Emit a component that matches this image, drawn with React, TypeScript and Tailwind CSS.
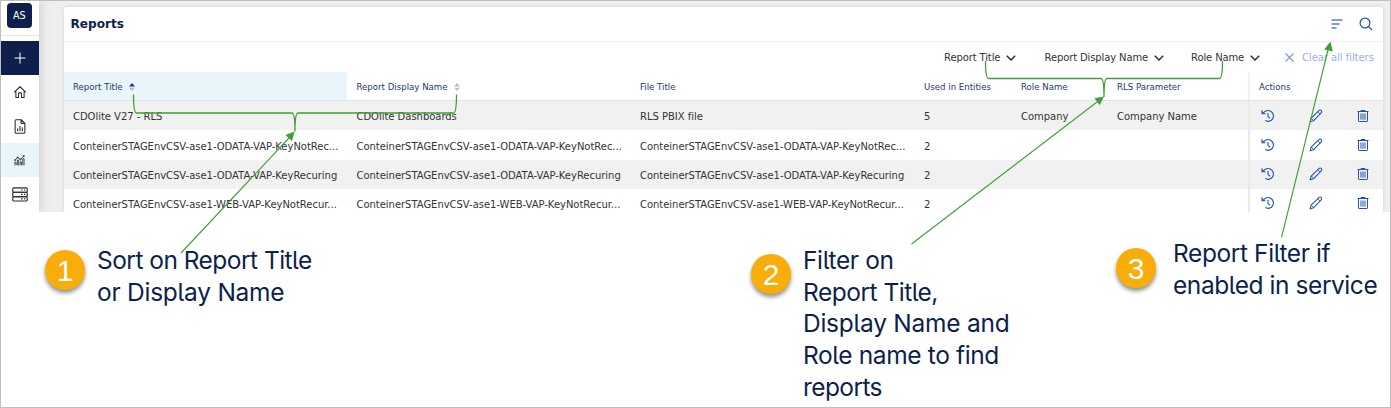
import React from "react";

type IconProps = { className?: string };

const HistoryIcon = ({ className }: IconProps) => (
  <svg viewBox="0 0 14 14" className={className} fill="none" stroke="currentColor" strokeWidth="1.100">
    <path d="M2.300 4.300A5.400 5.400 0 1 1 4.300 11.600" />
    <path d="M1 1.300v3.500h3.500" />
    <path d="M1.300 2.200v2.300h2.300z" fill="currentColor" stroke="none" />
    <path d="M7 4v3.600l2.100 1.600" />
  </svg>
);

const PencilIcon = ({ className }: IconProps) => (
  <svg viewBox="0 0 16 16" className={className} fill="none" stroke="currentColor" strokeWidth="1.200" strokeLinejoin="round">
    <path d="M1.300 14.700l1.200-4.400 8.800-8.500c.8-.8 2-.8 2.700-.1s.7 1.900-.1 2.700L5.400 13.300z" />
    <path d="M10 3.100l2.800 2.800M2.500 10.300l2.900 3" strokeWidth="1" />
  </svg>
);

const TrashIcon = ({ className }: IconProps) => (
  <svg viewBox="0 0 14 14" className={className} fill="none" stroke="currentColor" strokeWidth="1">
    <path d="M1.500 2.500h11M5 2.500v-1h4v1M2.500 2.500v9.400c0 .4.200.6.600.6h7.800c.4 0 .6-.2.600-.6V2.500" />
    <path d="M5 4.500v6.200M7 4.500v6.200M9 4.500v6.200" />
  </svg>
);

const Chevron = () => (
  <svg viewBox="0 0 10 6" className="h-[6px] w-[10px]" fill="none" stroke="#262626" strokeWidth="1.400">
    <path d="M.8.800L5 5 9.200.800" />
  </svg>
);

const SortMark = ({ active = false }: { active?: boolean }) => (
  <svg viewBox="0 0 6 8" className="h-[8px] w-[6px]">
    <path d="M3 0l3 3.600H0z" fill={active ? "#0b3a9b" : "#bdbdbd"} />
    <path d="M3 8L0 4.700h6z" fill="#bdbdbd" />
  </svg>
);

const HomeIcon = () => (
  <svg viewBox="0 0 16 16" className="size-[14px]" fill="none" stroke="#2b2b2b" strokeWidth="1.200" strokeLinejoin="round">
    <path d="M1.300 8.500L8 2l6.700 6.500M3.300 7v7.200h3V9.800c0-.500.300-.800.800-.800h1.800c.5 0 .8.300.8.800v4.400h3V7" />
  </svg>
);

const ReportIcon = () => (
  <svg viewBox="0 0 12 16" className="h-[15px] w-[12px]" fill="none" stroke="#2b2b2b" strokeWidth="1.150" strokeLinejoin="round">
    <path d="M.8 2c0-.700.4-1.200 1.100-1.200h5.300l4 4V14c0 .700-.4 1.200-1.100 1.200H1.900c-.7 0-1.100-.5-1.100-1.200zM7.200.800v4h4" />
    <path d="M3.500 10v3M6 7.500V13M8.500 9v4" />
  </svg>
);

const AnalyticsIcon = () => (
  <svg viewBox="0 0 12 12" className="size-[11px]" fill="none" stroke="#333" strokeWidth=".9">
    <path d="M1.300 5.500L4 2.700l3.200 2.200L10.600 1" />
    <circle cx="1.200" cy="5.500" r=".6" fill="#333" />
    <circle cx="4" cy="2.700" r=".6" fill="#333" />
    <circle cx="7.200" cy="4.900" r=".6" fill="#333" />
    <circle cx="10.700" cy="1" r=".6" fill="#333" />
    <path d="M.9 11.200V8h1.400v3.200M3.700 11.200V5.500h1.400v5.700M6.700 11.200V7.500h1.400v3.700M9.600 11.200V4H11v7.200" />
  </svg>
);

const ServerIcon = () => (
  <svg viewBox="0 0 16 15" className="h-[15px] w-[16px]" fill="none" stroke="#2b2b2b" strokeWidth="1.150">
    <rect x=".8" y=".8" width="14.400" height="4.400" rx="1" />
    <rect x=".8" y="5.200" width="14.400" height="4.400" rx="1" />
    <rect x=".8" y="9.600" width="14.400" height="4.400" rx="1" />
    <path d="M9 3h1.500M12 3h1.300M9 7.400h1.500M12 7.400h1.300M9 11.800h1.500M12 11.800h1.300" />
  </svg>
);

const columns = "grid grid-cols-[283.5px_283.5px_284px_97px_96px_140px_135px]";

const headers = ["Report Title", "Report Display Name", "File Title", "Used in Entities", "Role Name", "RLS Parameter", "Actions"];

const notRec = "ConteinerSTAGEnvCSV-ase1-ODATA-VAP-KeyNotRec...";
const rec = "ConteinerSTAGEnvCSV-ase1-ODATA-VAP-KeyRecuring";
const web = "ConteinerSTAGEnvCSV-ase1-WEB-VAP-KeyNotRecur...";

const rows = [
  ["CDOlite V27 - RLS", "CDOlite Dashboards", "RLS PBIX file", "5", "Company", "Company Name"],
  [notRec, notRec, notRec, "2", "", ""],
  [rec, rec, rec, "2", "", ""],
  [web, web, web, "2", "", ""],
];

function Sidebar() {
  return (
    <nav className="z-10 flex w-[38px] shrink-0 flex-col bg-white shadow-[1px_0_12px_0_#c3cad1]">
      <div className="flex h-[35px] border-b border-[#e6e6e6] pt-[2px] pl-[6px]">
        <div className="flex h-[24.500px] w-[24.500px] items-center justify-center rounded-[4px] bg-[#0e1f4d] pt-px text-[9.600px] text-white">AS</div>
      </div>
      <div className="mt-[5px] flex h-[34px] items-center justify-center bg-[#0e1f4d] pr-px">
        <svg viewBox="0 0 12 12" className="size-[12px]" stroke="#fff" strokeWidth="1"><path d="M6 .5v11M.5 6h11" /></svg>
      </div>
      <div className="flex h-[34px] items-center justify-center pr-px"><HomeIcon /></div>
      <div className="flex h-[34px] items-center justify-center pr-px"><ReportIcon /></div>
      <div className="flex h-[34px] items-center justify-center bg-[#e8f5fb] pr-px"><AnalyticsIcon /></div>
      <div className="flex h-[34px] items-center justify-center pr-px"><ServerIcon /></div>
    </nav>
  );
}

function FilterButton({ label, className }: { label: string; className: string }) {
  return (
    <div className={`flex shrink-0 items-center gap-[6px] ${className}`}>
      <span className="whitespace-nowrap">{label}</span>
      <Chevron />
    </div>
  );
}

function ReportsCard() {
  return (
    <main className="mt-[6px] ml-[24.500px] w-[1319px] shrink-0 rounded-t-[3px] bg-white shadow-[0_0_4px_#d4d2d0]">
      <header className="flex h-[35px] items-center border-b border-[#efefef] pr-[10px] pl-[7px]">
        <h1 className="pt-px text-[12.100px] font-bold text-[#0e1f4d]">Reports</h1>
        <svg viewBox="0 0 12 10" className="ml-auto h-[10px] w-[12px]" stroke="#5b7fc4" strokeWidth="1.300">
          <path d="M.5 1h11M.5 5h8M.5 9h5" />
        </svg>
        <svg viewBox="0 0 14 14" className="ml-[16px] size-[14px]" fill="none" stroke="#2553ab" strokeWidth="1.200">
          <circle cx="6" cy="6" r="4.900" />
          <path d="M9.500 9.500l3.700 3.700" />
        </svg>
      </header>
      <div className="flex h-[30px] items-center pt-px pl-[880.500px] text-[10px] tracking-[-0.120px] text-[#333]">
        <FilterButton label="Report Title" className="w-[100.500px]" />
        <FilterButton label="Report Display Name" className="w-[146.500px]" />
        <FilterButton label="Role Name" className="w-[94px]" />
        <svg viewBox="0 0 9 9" className="size-[9px] shrink-0" stroke="#7f9bd0" strokeWidth="1.100"><path d="M.5.500l8 8M8.500.500l-8 8" /></svg>
        <span className="ml-[8px] whitespace-nowrap tracking-[-0.050px] text-[#9db2dc]">Clear all filters</span>
      </div>
      <div className={`${columns} h-[29px] border-b border-[#e2e2e2] text-[8.600px] text-[#26386b]`}>
        {headers.map((h, i) => (
          <div key={h} className={`flex items-center pt-[2px] pl-[9.500px] ${i === 0 ? "bg-[#e8f5fb]" : ""} ${i === 6 ? "border-l-2 border-[#f1f1f1]" : ""}`}>
            <span className="whitespace-nowrap">{h}</span>
            {i < 2 && <span className="-mt-px ml-[6.500px]"><SortMark active={i === 0} /></span>}
          </div>
        ))}
      </div>
      {rows.map((row, r) => (
        <div key={r} className={`${columns} h-[29.250px] text-[10px] tracking-[-0.030px] text-[#333] ${r % 2 === 0 ? "bg-[#f1f1f1]" : "bg-white"}`}>
          {row.map((cell, c) => (
            <div key={c} className="flex items-center pt-[2.500px] pl-[9.500px] whitespace-nowrap">{cell}</div>
          ))}
          <div className="flex items-center gap-[33.500px] border-l-2 border-[#e9e9e9] pl-[11.500px] text-[#2553ab]">
            <HistoryIcon className="size-[14px] shrink-0" />
            <PencilIcon className="size-[14px] shrink-0" />
            <TrashIcon className="size-[14px] shrink-0" />
          </div>
        </div>
      ))}
    </main>
  );
}

type Line = { text: string; tracking: string };

function Callout({ n, lines, className, textClass }: { n: number; lines: Line[]; className: string; textClass: string }) {
  return (
    <div className={`flex shrink-0 items-start ${className}`}>
      <div className="flex size-[40px] shrink-0 items-center justify-center rounded-full bg-[#f8ad0b] pt-px font-['Liberation_Sans',sans-serif] text-[30px] leading-none text-white shadow-[0_3px_4px_#00000070]">
        {n}
      </div>
      <div className={`shrink-0 font-[Inter,sans-serif] text-[24.500px] leading-[31.700px] text-[#0e1f4d] [font-feature-settings:'cv05'] ${textClass}`}>
        {lines.map((l) => (
          <p key={l.text} className={`whitespace-nowrap ${l.tracking}`}>{l.text}</p>
        ))}
      </div>
    </div>
  );
}

export default function App() {
  return (
    <div className="relative flex h-[408px] w-[1391px] flex-col overflow-hidden border border-[#bfbfbf] bg-white">
      <section className="flex h-[211px] shrink-0 overflow-hidden bg-[#f1efee] font-['DejaVu_Sans',sans-serif]">
        <Sidebar />
        <ReportsCard />
      </section>
      <section className="flex items-start">
        <Callout
          n={1}
          className="mt-[38px] ml-[44px] w-[706px]"
          textClass="ml-[12px] -mt-[5px]"
          lines={[
            { text: "Sort on Report Title", tracking: "tracking-[-0.530px]" },
            { text: "or Display Name", tracking: "tracking-[-0.250px]" },
          ]}
        />
        <Callout
          n={2}
          className="mt-[42px] w-[365px]"
          textClass="ml-[12px] -mt-[9px]"
          lines={[
            { text: "Filter on", tracking: "tracking-[-0.350px]" },
            { text: "Report Title,", tracking: "tracking-[-0.500px]" },
            { text: "Display Name and", tracking: "tracking-[-0.250px]" },
            { text: "Role name to find", tracking: "tracking-[-0.380px]" },
            { text: "reports", tracking: "tracking-[-0.600px]" },
          ]}
        />
        <Callout
          n={3}
          className="mt-[36px]"
          textClass="ml-[17px] -mt-[10px]"
          lines={[
            { text: "Report Filter if", tracking: "tracking-[-0.400px]" },
            { text: "enabled in service", tracking: "tracking-[-0.440px]" },
          ]}
        />
      </section>
      <svg viewBox="0 0 1391 408" className="pointer-events-none absolute -top-px -left-px z-20 h-[408px] w-[1391px]" fill="none" stroke="#3f9f35" strokeWidth="1.300">
        <path d="M133.500 94.500q0 18.500 3 18.500H292q3 0 3 18.500q0-18.500 3-18.500H453.500q3 0 3-18.500" />
        <path d="M985.500 61q0 17.500 3 17.500H1101q3 0 3 18.500q0-18.500 3-18.500H1219.500q3 0 3-17.500" />
        <path d="M181 253L289 138M911.500 244L1097 102M1281.500 237.500L1328 50" strokeWidth="1.100" />
        <path d="M294.500 131.500l-2.500 9.500-6.500-6zM1104 96.500l-4.300 8.800-5.300-7zM1330.500 41.500l2.300 10-8.600-2z" fill="#3f9f35" stroke="none" />
      </svg>
    </div>
  );
}
